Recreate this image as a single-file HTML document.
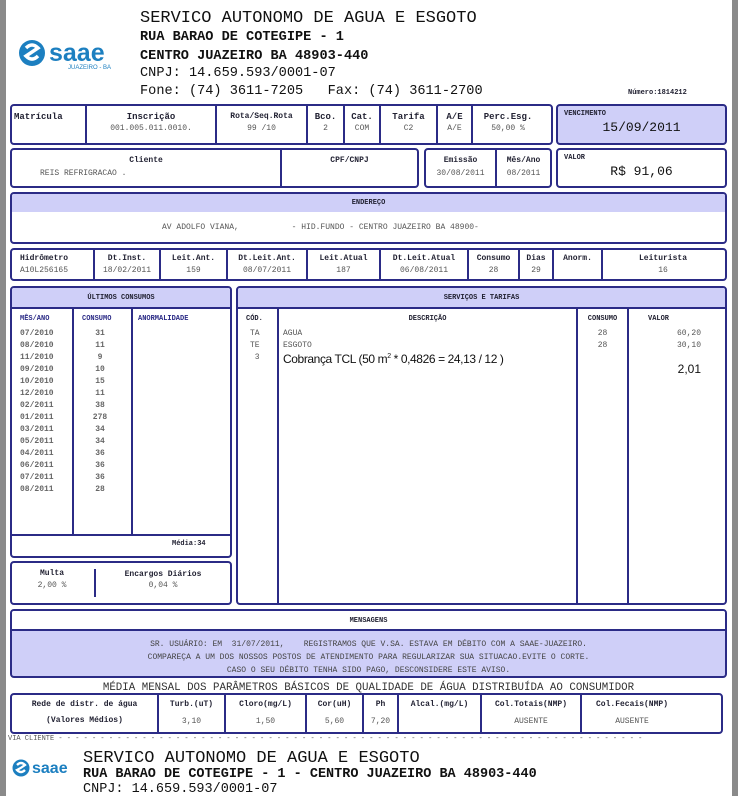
<!DOCTYPE html>
<html><head><meta charset="utf-8"><style>
*{margin:0;padding:0;box-sizing:border-box}
body{width:738px;height:796px;background:#fff;position:relative;overflow:hidden;font-family:"Liberation Mono",monospace;color:#333}
.a{position:absolute}
.b{position:absolute;border:2px solid #2b2b86;border-radius:4px}
.f{background:#cfcff8}
.v{position:absolute;top:0;bottom:0;border-left:2px solid #2b2b86}
.h{position:absolute;left:0;right:0;border-top:2px solid #2b2b86}
.s{font-size:8px;font-weight:bold;color:#223;white-space:nowrap}
.t{font-size:8px;color:#555;white-space:nowrap}
.c{text-align:center}
.hd{font-family:"Liberation Mono",monospace;color:#111;white-space:nowrap}
</style></head><body>
<div class="a" style="left:0;top:0;width:6px;height:796px;background:#8a8a8a"></div>
<div class="a" style="right:0;top:0;width:6px;height:796px;background:#8a8a8a"></div>

<!-- logo -->
<svg class="a" style="left:18px;top:38px" width="112" height="34" viewBox="0 0 112 34">
<circle cx="14" cy="15" r="13" fill="#1c7fc0"/>
<path d="M8 10 q6 -6 12 0 q-6 4 -12 8 q6 6 12 0" stroke="#fff" stroke-width="3.5" fill="none"/>
<text x="31" y="23" font-family="Liberation Sans,sans-serif" font-weight="bold" font-size="25" fill="#1c7fc0">saae</text>
<text x="50" y="31" font-family="Liberation Sans,sans-serif" font-size="6" fill="#1c7fc0">JUAZEIRO - BA</text>
</svg>
<div class="a hd" style="left:140px;top:9px;font-size:17px">SERVICO AUTONOMO DE AGUA E ESGOTO</div>
<div class="a hd" style="left:140px;top:30px;font-size:13.6px;font-weight:bold">RUA BARAO DE COTEGIPE - 1</div>
<div class="a hd" style="left:140px;top:49px;font-size:13.6px;font-weight:bold">CENTRO JUAZEIRO BA 48903-440</div>
<div class="a hd" style="left:140px;top:66px;font-size:13.6px">CNPJ: 14.659.593/0001-07</div>
<div class="a hd" style="left:140px;top:84px;font-size:13.6px">Fone: (74) 3611-7205 &nbsp;&nbsp;Fax: (74) 3611-2700</div>
<div class="a s" style="left:628px;top:89px;font-size:7px">Número:1814212</div>

<!-- row1 -->
<div class="b" style="left:10px;top:104px;width:543px;height:41px">
<div class="v" style="left:73px"></div><div class="v" style="left:203px"></div><div class="v" style="left:294px"></div><div class="v" style="left:331px"></div><div class="v" style="left:367px"></div><div class="v" style="left:424px"></div><div class="v" style="left:459px"></div>
<div class="a s" style="left:2px;top:6px;font-size:9px">Matrícula</div>
<div class="a s c" style="left:75px;width:128px;top:6px;font-size:9px">Inscrição</div><div class="a t c" style="left:75px;width:128px;top:18px">001.005.011.0010.</div>
<div class="a s c" style="left:205px;width:89px;top:6px">Rota/Seq.Rota</div><div class="a t c" style="left:205px;width:89px;top:18px">99 /10</div>
<div class="a s c" style="left:296px;width:35px;top:6px;font-size:9px">Bco.</div><div class="a t c" style="left:296px;width:35px;top:18px">2</div>
<div class="a s c" style="left:333px;width:34px;top:6px;font-size:9px">Cat.</div><div class="a t c" style="left:333px;width:34px;top:18px">COM</div>
<div class="a s c" style="left:369px;width:55px;top:6px;font-size:9px">Tarifa</div><div class="a t c" style="left:369px;width:55px;top:18px">C2</div>
<div class="a s c" style="left:426px;width:33px;top:6px;font-size:9px">A/E</div><div class="a t c" style="left:426px;width:33px;top:18px">A/E</div>
<div class="a s c" style="left:461px;width:70px;top:6px;font-size:9px">Perc.Esg.</div><div class="a t c" style="left:461px;width:70px;top:18px">50,00 %</div>
</div>
<div class="b f" style="left:556px;top:104px;width:171px;height:41px">
<div class="a s" style="left:6px;top:4px;font-size:7px">VENCIMENTO</div>
<div class="a hd c" style="left:0;width:167px;top:14px;font-size:13px">15/09/2011</div></div>

<!-- row2 -->
<div class="b" style="left:10px;top:148px;width:409px;height:40px">
<div class="v" style="left:268px"></div>
<div class="a s c" style="left:0;width:268px;top:6px">Cliente</div>
<div class="a t" style="left:28px;top:19px">REIS REFRIGRACAO .</div>
<div class="a s c" style="left:270px;width:135px;top:6px">CPF/CNPJ</div></div>
<div class="b" style="left:424px;top:148px;width:128px;height:40px">
<div class="v" style="left:69px"></div>
<div class="a s c" style="left:0;width:69px;top:6px">Emissão</div><div class="a t c" style="left:0;width:69px;top:19px">30/08/2011</div>
<div class="a s c" style="left:71px;width:53px;top:6px">Mês/Ano</div><div class="a t c" style="left:71px;width:53px;top:19px">08/2011</div></div>
<div class="b" style="left:556px;top:148px;width:171px;height:40px">
<div class="a s" style="left:6px;top:4px;font-size:7px">VALOR</div>
<div class="a hd c" style="left:0;width:167px;top:14px;font-size:13px">R$ 91,06</div></div>

<!-- endereco -->
<div class="b" style="left:10px;top:192px;width:717px;height:52px;overflow:hidden">
<div class="a f" style="left:0;right:0;top:0;height:18px"></div>
<div class="a s c" style="left:0;right:0;top:5px;font-size:7px">ENDEREÇO</div>
<div class="a t" style="left:150px;top:29px">AV ADOLFO VIANA, &nbsp;&nbsp;&nbsp;&nbsp;&nbsp;&nbsp;&nbsp;&nbsp;&nbsp;&nbsp;- HID.FUNDO - CENTRO JUAZEIRO BA 48900-</div></div>

<!-- hidrometro -->
<div class="b" style="left:10px;top:248px;width:717px;height:33px">
<div class="v" style="left:81px"></div><div class="v" style="left:147px"></div><div class="v" style="left:214px"></div><div class="v" style="left:294px"></div><div class="v" style="left:367px"></div><div class="v" style="left:455px"></div><div class="v" style="left:506px"></div><div class="v" style="left:540px"></div><div class="v" style="left:589px"></div>
<div class="a s" style="left:8px;top:4px">Hidrômetro</div><div class="a t" style="left:8px;top:16px">A10L256165</div>
<div class="a s c" style="left:83px;width:64px;top:4px">Dt.Inst.</div><div class="a t c" style="left:83px;width:64px;top:16px">18/02/2011</div>
<div class="a s c" style="left:149px;width:65px;top:4px">Leit.Ant.</div><div class="a t c" style="left:149px;width:65px;top:16px">159</div>
<div class="a s c" style="left:216px;width:78px;top:4px">Dt.Leit.Ant.</div><div class="a t c" style="left:216px;width:78px;top:16px">08/07/2011</div>
<div class="a s c" style="left:296px;width:71px;top:4px">Leit.Atual</div><div class="a t c" style="left:296px;width:71px;top:16px">187</div>
<div class="a s c" style="left:369px;width:86px;top:4px">Dt.Leit.Atual</div><div class="a t c" style="left:369px;width:86px;top:16px">06/08/2011</div>
<div class="a s c" style="left:457px;width:49px;top:4px">Consumo</div><div class="a t c" style="left:457px;width:49px;top:16px">28</div>
<div class="a s c" style="left:508px;width:32px;top:4px">Dias</div><div class="a t c" style="left:508px;width:32px;top:16px">29</div>
<div class="a s c" style="left:542px;width:47px;top:4px">Anorm.</div>
<div class="a s c" style="left:591px;width:120px;top:4px">Leiturista</div><div class="a t c" style="left:591px;width:120px;top:16px">16</div></div>

<!-- ultimos -->
<div class="b" style="left:10px;top:286px;width:222px;height:272px;overflow:hidden">
<div class="a f" style="left:0;right:0;top:0;height:21px;border-bottom:2px solid #2b2b86"></div>
<div class="a s c" style="left:0;right:0;top:6px;font-size:7px">ÚLTIMOS CONSUMOS</div>
<div class="a" style="left:60px;top:21px;height:226px;border-left:2px solid #2b2b86"></div>
<div class="a" style="left:119px;top:21px;height:226px;border-left:2px solid #2b2b86"></div>
<div class="h" style="top:246px"></div>
<div class="a s" style="left:8px;top:27px;font-size:7px;color:#2b2b86">MÊS/ANO</div>
<div class="a s" style="left:70px;top:27px;font-size:7px;color:#2b2b86">CONSUMO</div>
<div class="a s" style="left:126px;top:27px;font-size:7px;color:#2b2b86">ANORMALIDADE</div>
<div class="a t" style="left:8px;top:40px;line-height:12px;font-weight:bold;color:#666">07/2010<br>08/2010<br>11/2010<br>09/2010<br>10/2010<br>12/2010<br>02/2011<br>01/2011<br>03/2011<br>05/2011<br>04/2011<br>06/2011<br>07/2011<br>08/2011</div>
<div class="a t c" style="left:62px;width:52px;top:40px;line-height:12px;font-weight:bold;color:#666">31<br>11<br>9<br>10<br>15<br>11<br>38<br>278<br>34<br>34<br>36<br>36<br>36<br>28</div>
<div class="a s" style="left:160px;top:252px;font-size:7px">Média:34</div></div>

<div class="b" style="left:10px;top:561px;width:222px;height:44px">
<div class="a" style="left:82px;top:6px;height:28px;border-left:2px solid #2b2b86"></div>
<div class="a s c" style="left:0;width:80px;top:6px">Multa</div><div class="a t c" style="left:0;width:80px;top:18px">2,00 %</div>
<div class="a s c" style="left:84px;width:134px;top:7px">Encargos Diários</div><div class="a t c" style="left:84px;width:134px;top:18px">0,04 %</div></div>

<!-- servicos -->
<div class="b" style="left:236px;top:286px;width:491px;height:319px;overflow:hidden">
<div class="a f" style="left:0;right:0;top:0;height:21px;border-bottom:2px solid #2b2b86"></div>
<div class="a s c" style="left:0;right:0;top:6px;font-size:7px">SERVIÇOS E TARIFAS</div>
<div class="a" style="left:39px;top:21px;bottom:0;border-left:2px solid #2b2b86"></div>
<div class="a" style="left:338px;top:21px;bottom:0;border-left:2px solid #2b2b86"></div>
<div class="a" style="left:389px;top:21px;bottom:0;border-left:2px solid #2b2b86"></div>
<div class="a s" style="left:8px;top:27px;font-size:7px">CÓD.</div>
<div class="a s c" style="left:41px;width:297px;top:27px;font-size:7px">DESCRIÇÃO</div>
<div class="a s c" style="left:340px;width:49px;top:27px;font-size:7px">CONSUMO</div>
<div class="a s" style="left:410px;top:27px;font-size:7px">VALOR</div>
<div class="a t" style="left:12px;top:40px;line-height:12px">TA<br>TE<br>&nbsp;3</div>
<div class="a t" style="left:45px;top:40px;line-height:12px">AGUA<br>ESGOTO</div>
<div class="a" style="left:45px;top:64px;font-family:'Liberation Sans',sans-serif;font-size:12px;color:#111;letter-spacing:-0.4px">Cobrança TCL (50 m<sup style="font-size:7px">2</sup> * 0,4826 = 24,13 / 12 )</div>
<div class="a t" style="left:340px;width:49px;top:40px;line-height:12px;text-align:center">28<br>28</div>
<div class="a t" style="left:391px;width:72px;top:40px;line-height:12px;text-align:right">60,20<br>30,10</div>
<div class="a" style="left:391px;width:72px;top:74px;text-align:right;font-family:'Liberation Sans',sans-serif;font-size:12px;color:#111">2,01</div></div>

<!-- mensagens -->
<div class="b f" style="left:10px;top:609px;width:717px;height:69px;overflow:hidden">
<div class="a" style="left:0;right:0;top:0;height:20px;background:#fff;border-bottom:2px solid #2b2b86"></div>
<div class="a s c" style="left:0;right:0;top:6px;font-size:7px">MENSAGENS</div>
<div class="a t c" style="left:0;right:0;top:27px;line-height:13px;color:#444">SR. USUÁRIO: EM &nbsp;31/07/2011, &nbsp;&nbsp;&nbsp;REGISTRAMOS QUE V.SA. ESTAVA EM DÉBITO COM A SAAE-JUAZEIRO.<br>COMPAREÇA A UM DOS NOSSOS POSTOS DE ATENDIMENTO PARA REGULARIZAR SUA SITUACAO.EVITE O CORTE.<br>CASO O SEU DÉBITO TENHA SIDO PAGO, DESCONSIDERE ESTE AVISO.</div></div>

<div class="a hd c" style="left:10px;width:717px;top:682px;font-size:10.8px;color:#333">MÉDIA MENSAL DOS PARÂMETROS BÁSICOS DE QUALIDADE DE ÁGUA DISTRIBUÍDA AO CONSUMIDOR</div>
<div class="b" style="left:10px;top:693px;width:713px;height:41px">
<div class="v" style="left:145px"></div><div class="v" style="left:212px"></div><div class="v" style="left:293px"></div><div class="v" style="left:350px"></div><div class="v" style="left:385px"></div><div class="v" style="left:468px"></div><div class="v" style="left:568px"></div>
<div class="a s c" style="left:0;width:145px;top:5px">Rede de distr. de água</div><div class="a s c" style="left:0;width:145px;top:21px">(Valores Médios)</div>
<div class="a s c" style="left:147px;width:65px;top:5px">Turb.(uT)</div><div class="a t c" style="left:147px;width:65px;top:22px">3,10</div>
<div class="a s c" style="left:214px;width:79px;top:5px">Cloro(mg/L)</div><div class="a t c" style="left:214px;width:79px;top:22px">1,50</div>
<div class="a s c" style="left:295px;width:55px;top:5px">Cor(uH)</div><div class="a t c" style="left:295px;width:55px;top:22px">5,60</div>
<div class="a s c" style="left:352px;width:33px;top:5px">Ph</div><div class="a t c" style="left:352px;width:33px;top:22px">7,20</div>
<div class="a s c" style="left:387px;width:81px;top:5px">Alcal.(mg/L)</div>
<div class="a s c" style="left:470px;width:98px;top:5px">Col.Totais(NMP)</div><div class="a t c" style="left:470px;width:98px;top:22px">AUSENTE</div>
<div class="a s c" style="left:570px;width:100px;top:5px">Col.Fecais(NMP)</div><div class="a t c" style="left:570px;width:100px;top:22px">AUSENTE</div></div>

<div class="a t" style="left:8px;top:735px;font-size:7px">VIA CLIENTE - - - - - - - - - - - - - - - - - - - - - - - - - - - - - - - - - - - - - - - - - - - - - - - - - - - - - - - - - - - - - - - - - - - - - -</div>

<svg class="a" style="left:12px;top:758px" width="70" height="22" viewBox="0 0 70 22">
<circle cx="9" cy="10" r="8.5" fill="#1c7fc0"/>
<path d="M5 7 q4 -4 8 0 q-4 3 -8 5 q4 4 8 0" stroke="#fff" stroke-width="2.3" fill="none"/>
<text x="20" y="15" font-family="Liberation Sans,sans-serif" font-weight="bold" font-size="16" fill="#1c7fc0">saae</text>
</svg>
<div class="a hd" style="left:83px;top:749px;font-size:17px">SERVICO AUTONOMO DE AGUA E ESGOTO</div>
<div class="a hd" style="left:83px;top:767px;font-size:13.5px;font-weight:bold">RUA BARAO DE COTEGIPE - 1 - CENTRO JUAZEIRO BA 48903-440</div>
<div class="a hd" style="left:83px;top:782px;font-size:13.5px">CNPJ: 14.659.593/0001-07</div>
</body></html>
